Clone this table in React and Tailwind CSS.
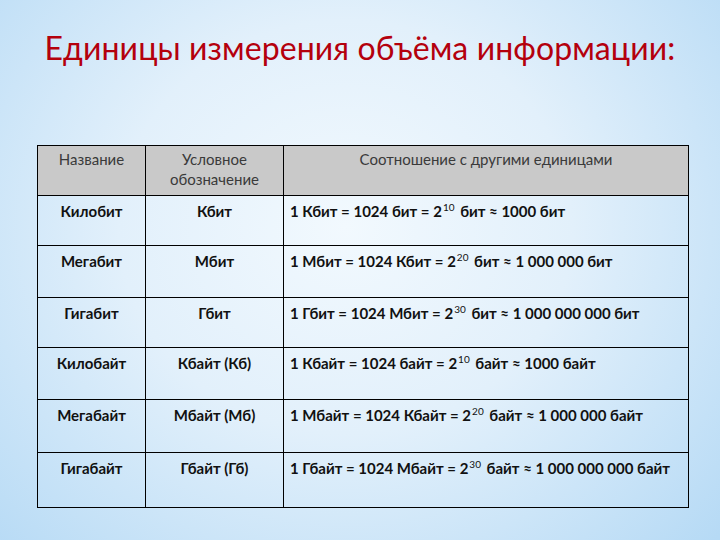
import React from "react";

const rows = [
  ["Килобит", "Кбит", ["1 Кбит = 1024 бит = 2", "10", " бит ≈ 1000 бит"], "h-[50px]"],
  ["Мегабит", "Мбит", ["1 Мбит = 1024 Кбит = 2", "20", " бит ≈ 1 000 000 бит"], "h-[52px]"],
  ["Гигабит", "Гбит", ["1 Гбит = 1024 Мбит = 2", "30", " бит ≈ 1 000 000 000 бит"], "h-[50px]"],
  ["Килобайт", "Кбайт (Кб)", ["1 Кбайт = 1024 байт = 2", "10", " байт ≈ 1000 байт"], "h-[52px]"],
  ["Мегабайт", "Мбайт (Мб)", ["1 Мбайт = 1024 Кбайт = 2", "20", " байт ≈ 1 000 000 байт"], "h-[53px]"],
  ["Гигабайт", "Гбайт (Гб)", ["1 Гбайт = 1024 Мбайт = 2", "30", " байт ≈ 1 000 000 000 байт"], "h-[55px]"],
];

export default function App() {
  return (
    <div
      className="w-[720px] h-[540px] overflow-hidden bg-[radial-gradient(ellipse_70%_85%_at_48%_42%,#f2f9fe_0%,#e2f0fb_45%,#b6daf5_100%)] font-['Lato',sans-serif]"
    >
      <h1 className="pt-[28px] h-[145px] text-center text-[32px] leading-[40px] text-[#b4000d] font-normal tracking-[0.1px]">
        Единицы измерения объёма информации:
      </h1>
      <table className="ml-[37px] w-[652px] border-collapse text-[15px] text-[#111]">
        <colgroup>
          <col className="w-[108px]" />
          <col className="w-[138px]" />
          <col />
        </colgroup>
        <thead>
          <tr className="h-[50px] bg-[#c9c9c9] text-[#3a3a3a] font-normal">
            <th className="border border-black align-top pt-[3px] font-normal leading-[20px]">Название</th>
            <th className="border border-black align-top pt-[3px] font-normal leading-[20px]">
              Условное
              <br />
              обозначение
            </th>
            <th className="border border-black align-top pt-[3px] font-normal leading-[20px]">
              Соотношение с другими единицами
            </th>
          </tr>
        </thead>
        <tbody className="font-bold">
          {rows.map(([name, sym, rel, h]) => (
            <tr key={name} className={h}>
              <td className="border border-black align-top pt-[5px] text-center leading-[20px]">{name}</td>
              <td className="border border-black align-top pt-[5px] text-center leading-[20px]">{sym}</td>
              <td className="border border-black align-top pt-[5px] pl-[6px] leading-[20px] whitespace-nowrap">
                {rel[0]}
                <sup className="text-[10px] font-normal relative top-[-6px] ml-[1px] mr-[2px]">{rel[1]}</sup>
                {rel[2]}
              </td>
            </tr>
          ))}
        </tbody>
      </table>
    </div>
  );
}
